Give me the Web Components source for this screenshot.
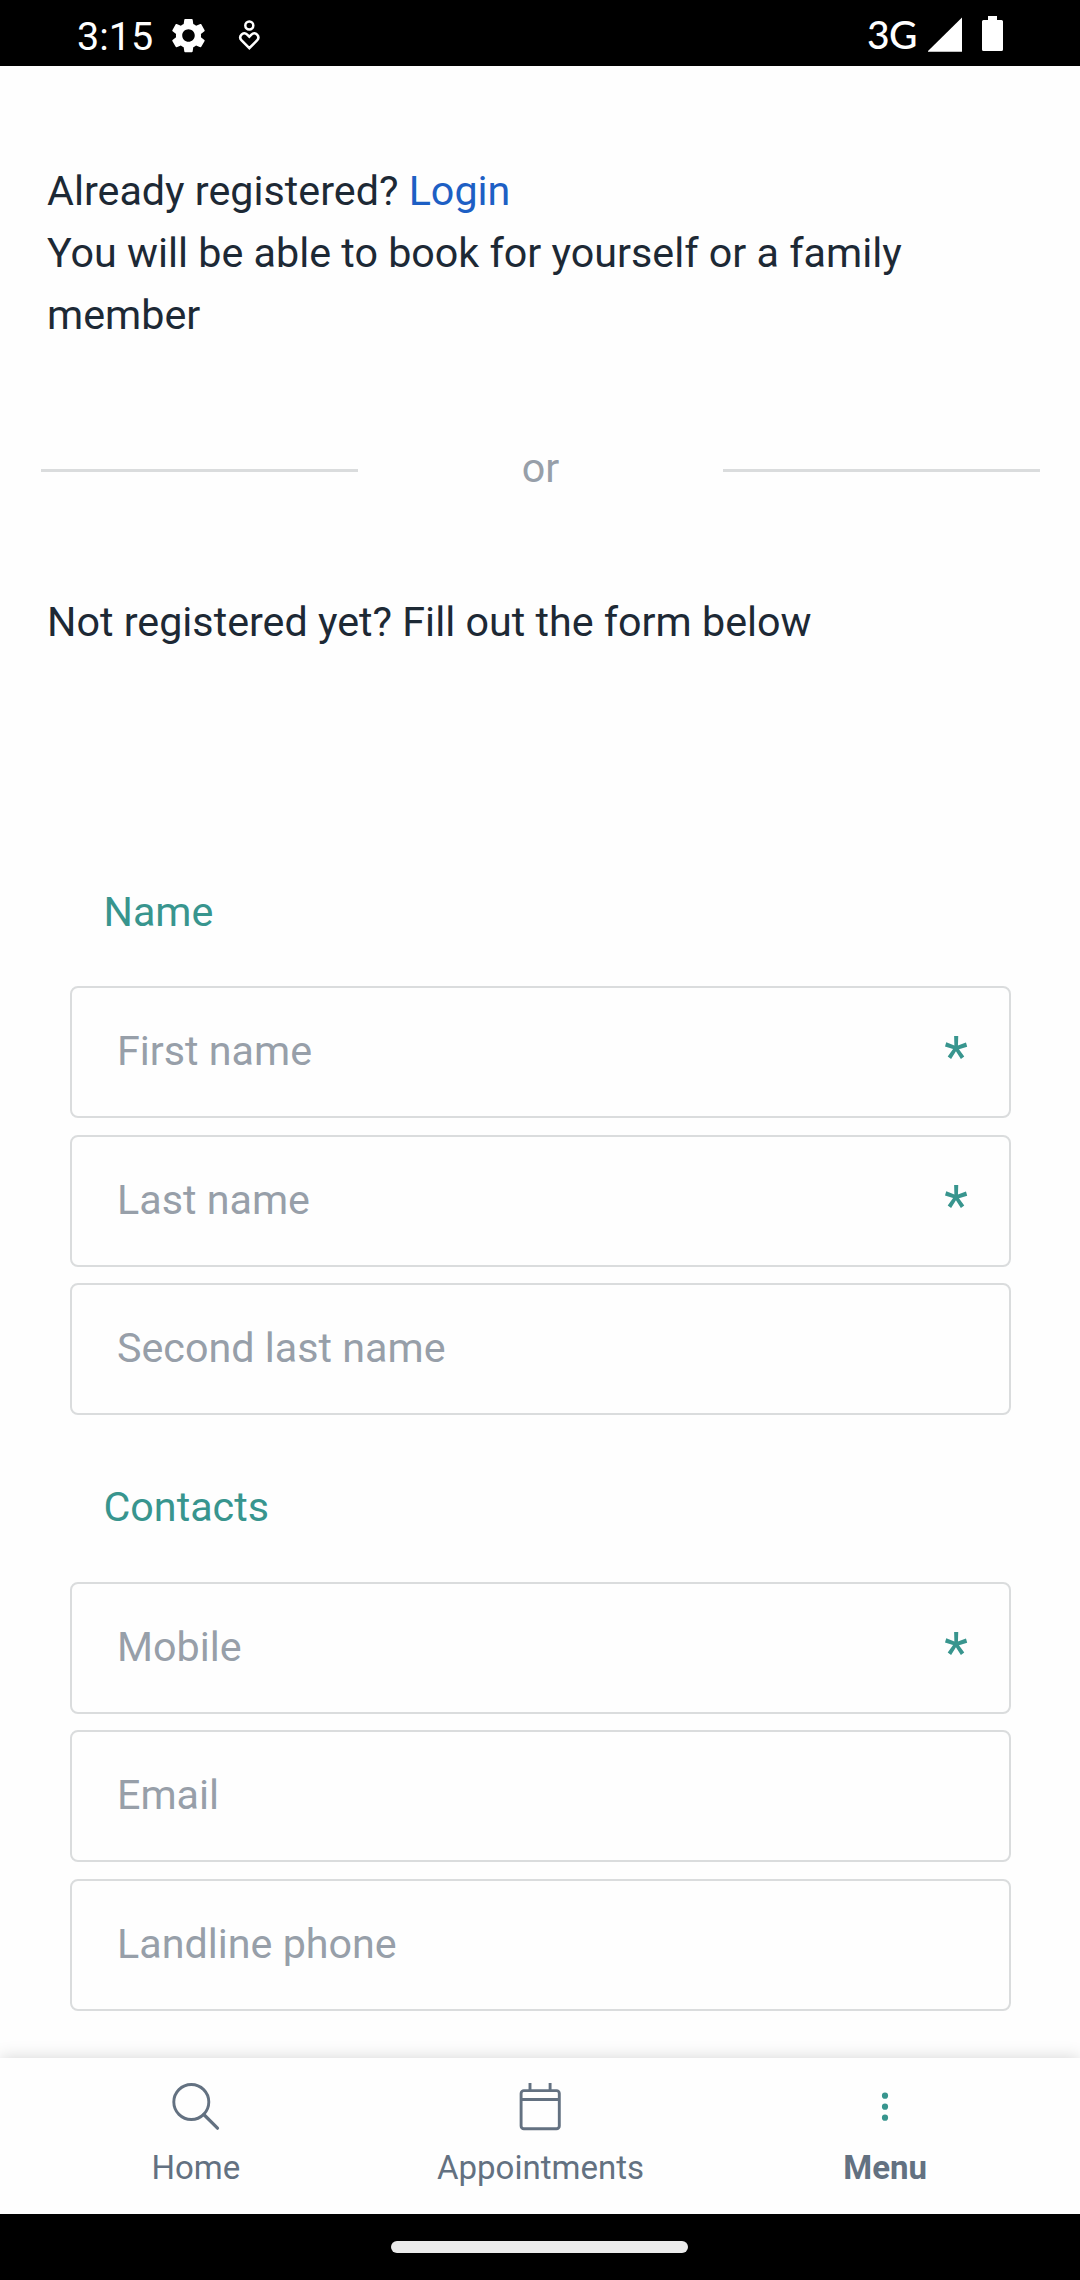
<!DOCTYPE html>
<html lang="en">
<head>
<meta charset="utf-8">
<title>Registration</title>
<style>
html,body{margin:0;height:100%;background:#fefefe;font-family:Roboto,"Liberation Sans",sans-serif}
body{overflow:hidden}
</style>
</head>
<body>
<registration-screen></registration-screen>
<script>
const define = (name, html) => {
  const template = document.createElement('template');
  template.innerHTML = html;
  customElements.define(name, class extends HTMLElement {
    constructor() {
      super();
      this.attachShadow({ mode: 'open' }).append(template.content.cloneNode(true));
    }
  });
};

define('status-bar', `
<style>
:host{display:flex;flex:none;height:66px;background:#000;color:#fff;justify-content:space-between}
.side{display:flex;height:66px}
.time{font-size:39.5px;line-height:46px;padding:14px 0 0 77px;width:90px;white-space:nowrap}
.net{font:500 39px/46px Lato,Roboto,sans-serif;padding:11px 0 0;width:60px;letter-spacing:-.5px}
svg{display:block;fill:#fff}
</style>
<div class="side">
  <div class="time">3:15</div>
  <svg width="110" height="66" viewBox="167 0 110 66">
    <path transform="translate(167.6 14.7) scale(1.74)" d="M19.14 12.94c.04-.3.06-.61.06-.94 0-.32-.02-.64-.07-.94l2.03-1.58c.18-.14.23-.41.12-.61l-1.92-3.32c-.12-.22-.37-.29-.59-.22l-2.39.96c-.5-.38-1.03-.7-1.62-.94l-.36-2.54c-.04-.24-.24-.41-.48-.41h-3.84c-.24 0-.43.17-.47.41l-.36 2.54c-.59.24-1.13.57-1.62.94l-2.39-.96c-.22-.08-.47 0-.59.22L2.74 8.87c-.12.21-.08.47.12.61l2.03 1.58c-.05.3-.09.63-.09.94s.02.64.07.94l-2.03 1.58c-.18.14-.23.41-.12.61l1.92 3.32c.12.22.37.29.59.22l2.39-.96c.5.38 1.03.7 1.62.94l.36 2.54c.05.24.24.41.48.41h3.84c.24 0 .44-.17.47-.41l.36-2.54c.59-.24 1.13-.56 1.62-.94l2.39.96c.22.08.47 0 .59-.22l1.92-3.32c.12-.22.07-.47-.12-.61l-2.01-1.58zM12 15.6c-1.98 0-3.6-1.62-3.6-3.6s1.62-3.6 3.6-3.6 3.6 1.62 3.6 3.6-1.62 3.6-3.6 3.6z"/>
    <g fill="none" stroke="#fff" stroke-width="2.5">
      <circle cx="249.3" cy="25.5" r="4"/>
      <path d="M249.3 48.2 241.6 40.5C237.8 36.3 243.3 30.9 247.2 34.6L249.3 36.7 251.4 34.6C255.3 30.9 260.8 36.3 257 40.5Z"/>
    </g>
  </svg>
</div>
<div class="side">
  <div class="net">3G</div>
  <svg width="153" height="66" viewBox="927 0 153 66">
    <path d="M928 51.7V51L962 17.5V51.7Z"/>
    <path d="M988 16h9v4h4.500q1.500 0 1.500 1.500v28q0 1.500-1.500 1.500h-18q-1.500 0-1.500-1.500v-28q0-1.500 1.500-1.500h4.500Z"/>
  </svg>
</div>`);

define('text-divider', `
<style>
:host{display:flex;align-items:center;height:62px;font-size:41.25px;line-height:62px;color:#979fa9}
i{width:317px;height:3px;margin-top:5px;background:#dadcdd}
span{flex:1;text-align:center}
</style><i></i><span><slot></slot></span><i></i>`);

define('form-section', `
<style>
:host{display:block}
.title{padding-left:33.5px;font-size:41.25px;line-height:62px;color:#38958e}
.fields{display:flex;flex-direction:column;gap:16.5px;margin-top:43.500px}
</style>
<div class="title"><slot name="title"></slot></div>
<div class="fields"><slot></slot></div>`);

define('form-field', `
<style>
:host{display:flex;box-sizing:border-box;height:132px;border:2px solid #dadcdd;border-radius:8px;justify-content:space-between;padding:0 41px 0 45px;color:#979fa9;font-size:41.25px;line-height:126px}
::slotted([slot=mark]){font-size:55px;font-weight:400;line-height:139px;color:#38958e}
</style>
<span><slot></slot></span><slot name="mark"></slot>`);

define('nav-item', `
<style>
:host{display:flex;flex-direction:column;align-items:center;width:344.700px;font-size:33px;line-height:40px;color:#637181}
::slotted(svg){display:block;width:54px;height:54px;margin:21px 0 15px}
span{padding-left:1px}
</style>
<slot name="icon"></slot><span><slot></slot></span>`);

define('bottom-nav', `
<style>
:host{display:flex;flex:none;height:156px;justify-content:center;background:#fefefe;box-shadow:0 0 16px rgba(0,0,0,.17);position:relative}
</style><slot></slot>`);

define('system-bar', `
<style>
:host{display:flex;flex:none;height:66px;background:#000;justify-content:center;position:relative}
i{width:297px;height:11.500px;margin:27px 1px 0 0;border-radius:6px;background:#ebebeb}
</style><i></i>`);

define('registration-screen', `
<style>
:host{display:flex;flex-direction:column;width:1080px;height:2280px}
main{flex:1;min-height:0;overflow:hidden;padding-top:94px;box-sizing:border-box}
p{margin:0 47px;font-size:41.25px;line-height:62px;color:#1d2935}
a{color:#1d5fc4;text-decoration:none}
text-divider{margin:91px 40px 92px 41px}
form-section{margin:61px 69px 0 70px}
form-section.first{margin-top:227.500px}
.bold{font-weight:700}
</style>
<status-bar></status-bar>
<main>
  <p>Already registered? <a>Login</a><br>You will be able to book for yourself or a family member</p>
  <text-divider>or</text-divider>
  <p>Not registered yet? Fill out the form below</p>
  <form-section class="first"><span slot="title">Name</span>
    <form-field>First name<b slot="mark">*</b></form-field>
    <form-field>Last name<b slot="mark">*</b></form-field>
    <form-field>Second last name</form-field>
  </form-section>
  <form-section><span slot="title">Contacts</span>
    <form-field>Mobile<b slot="mark">*</b></form-field>
    <form-field>Email</form-field>
    <form-field>Landline phone</form-field>
  </form-section>
</main>
<bottom-nav>
  <nav-item><svg slot="icon" viewBox="168.500 2079 54 54" fill="none" stroke="#637181" stroke-width="2.900"><circle cx="191.800" cy="2102" r="17.500"/><path d="M204.300 2114.500 218 2128.200" stroke-width="3.200" stroke-linecap="round"/></svg>Home</nav-item>
  <nav-item><svg slot="icon" viewBox="513.500 2079 54 54" fill="none" stroke="#637181" stroke-width="2.900"><rect x="521.600" y="2090.600" width="38.200" height="38.200" rx="2.800"/><path d="M521 2099.500h39M530.500 2083v7.500M550.600 2083v7.500"/></svg>Appointments</nav-item>
  <nav-item class="bold"><svg slot="icon" viewBox="858 2079 54 54" fill="#38958e"><circle cx="885" cy="2095.700" r="3.100"/><circle cx="885" cy="2106.700" r="3.100"/><circle cx="885" cy="2117.700" r="3.100"/></svg>Menu</nav-item>
</bottom-nav>
<system-bar></system-bar>`);
</script>
</body>
</html>
